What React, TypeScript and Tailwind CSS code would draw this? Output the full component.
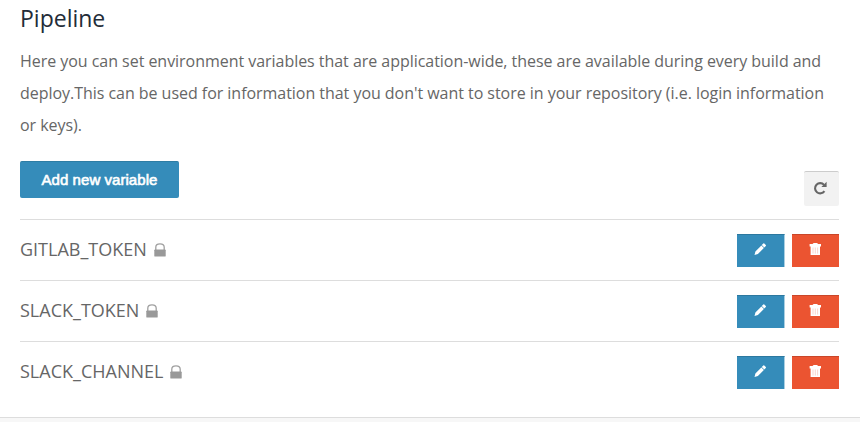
const variables = ["GITLAB_TOKEN", "SLACK_TOKEN", "SLACK_CHANNEL"];

function LockIcon() {
  return (
    <svg width="12" height="14" viewBox="0 0 12 14" className="-mt-px ml-[7px] shrink-0">
      <path d="M1.8 7V4.2C1.8 1.8 3.4 .9 6 .9S10.2 1.8 10.2 4.2V7" fill="none" stroke="#a0a0a0" strokeWidth="1.3" />
      <rect x="0.3" y="6.6" width="11.4" height="7" rx="0.7" fill="#999999" />
    </svg>
  );
}

function PencilIcon() {
  return (
    <svg width="12" height="12" viewBox="-0.5 0 12 12" fill="#ffffff">
      <path d="M0 12 .9 8.4 6.9 2.4 9.4 4.9 3.4 10.9ZM7.3 2 8.8.5Q9.3 0 9.8.5L11.3 2Q11.7 2.5 11.3 3L9.8 4.5Z" />
    </svg>
  );
}

function TrashIcon() {
  return (
    <svg width="12" height="12" viewBox="0 0 12 12">
      <path d="M4.3 1.5V.5H8.3V1.5" fill="none" stroke="#ffffff" />
      <path d="M0.6 1H12V3.4H0.6ZM1.6 3.4H11V12H1.6Z" fill="#ffffff" />
      <path d="M4 4.5V10.6M6.3 4.5V10.6M8.6 4.5V10.6" stroke="#f8c3b6" strokeWidth="0.7" />
    </svg>
  );
}

function RefreshIcon() {
  return (
    <svg width="14" height="14" viewBox="0 0 14 14">
      <path d="M11 3.9A5.1 5.1 0 1 0 11.4 10.1" fill="none" stroke="#666666" strokeWidth="2.1" />
      <path d="M13.6 0.8V6H8.4Z" fill="#666666" />
    </svg>
  );
}

export default function App() {
  return (
    <div className="flex h-[422px] w-[860px] flex-col overflow-hidden bg-white font-['Open_Sans','Noto_Sans',sans-serif] text-[#666666]">
      <main className="flex h-[417px] shrink-0 flex-col pr-[21px] pl-5">
        <h1 className="h-[45px] text-[23px] leading-[36px] text-[#232c38]">Pipeline</h1>
        <p className="h-[116px] text-base leading-8 tracking-[-0.038px] whitespace-nowrap">
          Here you can set environment variables that are application-wide, these are available during every build and
          <br />
          deploy.This can be used for information that you don't want to store in your repository (i.e. login information
          <br />
          or keys).
        </p>
        <div className="flex h-[58px] items-start justify-between">
          <button className="h-[37px] w-[159px] rounded-[2px] border-t border-[#2e7da4] bg-[#358cba] font-['Liberation_Sans',sans-serif] text-[15px] tracking-[0.05px] text-white [-webkit-text-stroke:0.6px_white]">
            Add new variable
          </button>
          <button
            aria-label="Refresh"
            className="mt-[10px] flex h-[35px] w-[35px] items-center justify-center rounded-[2px] border-t border-[#cccccc] bg-[#f2f2f2] pr-[3px] pb-[2px]"
          >
            <RefreshIcon />
          </button>
        </div>
        <ul>
          {variables.map((name) => (
            <li key={name} className="flex h-[61px] items-center border-t border-[#dddddd]">
              <span className="-mt-[2px] text-[18px] leading-[60px]">{name}</span>
              <LockIcon />
              <div className="ml-auto flex gap-[7px] pt-px">
                <button
                  aria-label="Edit"
                  className="flex h-[33px] w-12 items-center justify-center border-t border-r border-t-[#2c789f] border-r-[#a9cfe2] bg-[#358cba] pr-px pb-1"
                >
                  <PencilIcon />
                </button>
                <button
                  aria-label="Delete"
                  className="flex h-[33px] w-[47px] items-center justify-center border-t border-[#c94629] bg-[#eb5431] pr-px pb-1"
                >
                  <TrashIcon />
                </button>
              </div>
            </li>
          ))}
        </ul>
      </main>
      <footer className="h-[5px] shrink-0 border-t border-[#dddddd] bg-[#f7f7f7]" />
    </div>
  );
}
